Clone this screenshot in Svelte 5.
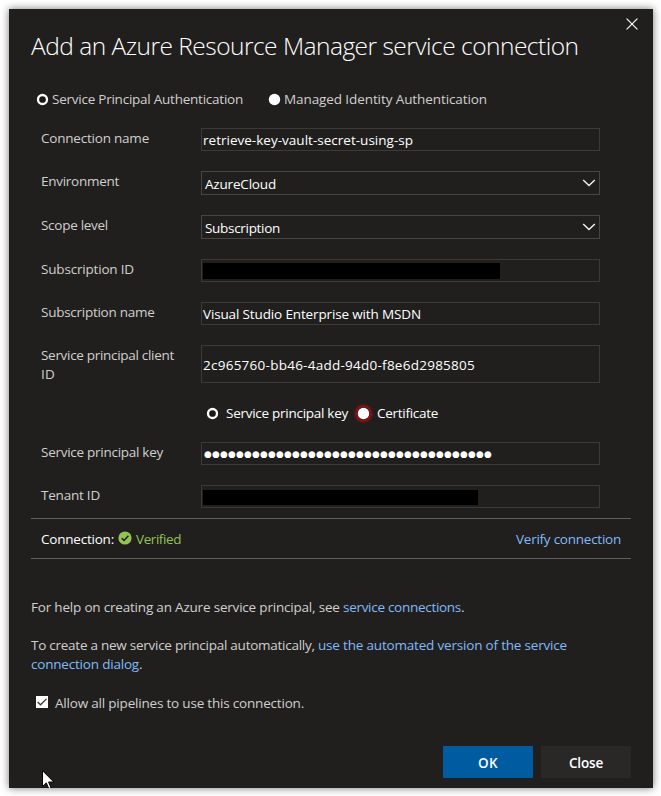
<script>
  // Distributes letter spacing so that a run of text fills the given width.
  function fit(node, width) {
    const natural = node.getBoundingClientRect().width;
    node.style.letterSpacing = (width - natural) / node.textContent.length + 'px';
  }

  const fields = [
    { label: [['Connection name', 108]], value: 'retrieve-key-vault-secret-using-sp', w: 210, kind: 'text' },
    { label: [['Environment', 78]], value: 'AzureCloud', w: 71, kind: 'select' },
    { label: [['Scope level', 67]], value: 'Subscription', w: 75, kind: 'select' },
    { label: [['Subscription ID', 93]], redacted: 297, kind: 'text' },
    { label: [['Subscription name', 113.5]], value: 'Visual Studio Enterprise with MSDN', w: 218, kind: 'text' },
    { label: [['Service principal client', 133], ['ID', 14]], value: '2c965760-bb46-4add-94d0-f8e6d2985805', w: 272, kind: 'tall' },
    { kind: 'radios' },
    { label: [['Service principal key', 122]], value: '●'.repeat(36), w: 288, kind: 'password' },
    { label: [['Tenant ID', 59]], redacted: 275, kind: 'text low' }
  ];
</script>

{#snippet radio(checked)}
  <svg class="radio" width="14" height="14" viewBox="0 0 14 14">
    {#if checked}
      <circle cx="6.5" cy="6.5" r="4.5" fill="#1b1a19" stroke="#fff" stroke-width="2.3" />
    {:else}
      <circle cx="6.5" cy="6.5" r="5.7" fill="#fff" />
    {/if}
  </svg>
{/snippet}

<main>
  <section class="dialog">
    <svg class="x" width="12" height="12" viewBox="0 0 12 12">
      <path d="M.6.6 11.4 11.4M11.4.6.6 11.4" stroke="#f4f3f2" stroke-width="1.3" />
    </svg>
    <h1><span use:fit={547.5}>Add an Azure Resource Manager service connection</span></h1>

    <div class="auth">
      <label class="first">{@render radio(true)}<span use:fit={191}>Service Principal Authentication</span></label>
      <label>{@render radio(false)}<span use:fit={203}>Managed Identity Authentication</span></label>
    </div>

    <div class="form">
      {#each fields as f}
        {#if f.kind === 'radios'}
          <div class="radios">
            {@render radio(true)}<span class="key" use:fit={122}>Service principal key</span>
            <i class="invalid">{@render radio(false)}</i><span class="cert" use:fit={61}>Certificate</span>
          </div>
        {:else}
          <div class="row">
            <div class="label">
              {#each f.label as [text, w]}<div><span use:fit={w}>{text}</span></div>{/each}
            </div>
            <div class="input {f.kind}">
              {#if f.redacted}
                <b class="redacted" style:width="{f.redacted}px"></b>
              {:else}
                <span use:fit={f.w}>{f.value}</span>
              {/if}
              {#if f.kind === 'select'}
                <svg width="14" height="8" viewBox="0 0 14 8">
                  <path d="M1.2 1 7 6.6 12.8 1" fill="none" stroke="#f4f3f2" stroke-width="1.4" />
                </svg>
              {/if}
            </div>
          </div>
        {/if}
      {/each}
    </div>

    <div class="status">
      <span class="white" use:fit={73}>Connection:</span>
      <svg width="14" height="14" viewBox="0 0 14 14">
        <circle cx="7" cy="7" r="6.6" fill="#92c353" />
        <path d="M3.7 7.2 6 9.4 10.4 4.8" fill="none" stroke="#201f1e" stroke-width="1.5" />
      </svg>
      <span class="green" use:fit={45}>Verified</span>
      <a class="verify" href="#verify"><span use:fit={105}>Verify connection</span></a>
    </div>

    <p class="help"><span use:fit={312}>For help on creating an Azure service principal, see&nbsp;</span><a href="#docs"><span use:fit={118}>service connections</span></a>.</p>
    <p class="auto">
      <span use:fit={287}>To create a new service principal automatically,&nbsp;</span><a href="#auto"><span use:fit={249}>use the automated version of the service</span><br /><span use:fit={108}>connection dialog</span></a>.
    </p>

    <div class="allow">
      <svg width="12" height="12" viewBox="0 0 12 12">
        <rect width="12" height="12" fill="#fff" />
        <path d="M1.6 6 4.5 8.8 10.5 2.9" fill="none" stroke="#333" stroke-width="1.2" />
      </svg>
      <span use:fit={249}>Allow all pipelines to use this connection.</span>
    </div>

    <div class="buttons">
      <button class="ok"><span use:fit={20}>OK</span></button>
      <button><span use:fit={34}>Close</span></button>
    </div>

    <svg class="cursor" width="13" height="20" viewBox="0 0 13 20">
      <path d="M.5.7V16.5L4.3 12.9 6.8 18.7 9 17.7 6.6 12H11.8Z" fill="#fff" stroke="#000" />
    </svg>
  </section>
</main>

<style>
  :global(body) { background: #fff; }
  main {
    box-sizing: border-box;
    width: 661px;
    height: 796px;
    padding: 9px 8px 8px 9px;
    overflow: hidden;
    font: 13.5px/19px "Open Sans", "Noto Sans", sans-serif;
    color: #d0cfce;
  }
  .dialog {
    position: relative;
    box-sizing: border-box;
    height: 779px;
    padding: 20px 22px 0;
    background: #201f1e;
    box-shadow: 0 0 8px rgba(0, 0, 0, .55);
    overflow: hidden;
    display: flex;
    flex-direction: column;
  }
  span { display: inline-block; white-space: nowrap; }
  .x { position: absolute; left: 617px; top: 9px; }
  h1 {
    margin: 0;
    height: 36px;
    font-size: 24.5px;
    line-height: 34px;
    font-weight: 300;
    color: #fff;
  }
  .auth { display: flex; margin-top: 25px; height: 19px; padding-left: 5px; }
  .auth label { display: flex; align-items: center; }
  .auth .first { width: 232px; }
  .auth span { margin-left: 2px; }
  .radio { display: block; flex: none; }
  .form { display: flex; flex-direction: column; gap: 20px; margin-top: 19px; padding: 0 31px 0 10px; }
  .row { display: flex; }
  .label { width: 160px; padding-top: 1px; height: 0; }
  .input {
    box-sizing: border-box;
    flex: 1;
    height: 23px;
    border: 1px solid #3b3a39;
    padding: 1px 4px 0 1px;
    display: flex;
    align-items: center;
    justify-content: space-between;
    color: #fff;
  }
  .select { height: 24px; border-color: #484644; padding: 2px 4px 0 3px; }
  .select svg { margin-top: -2px; margin-right: -1px; }
  .tall { height: 38px; padding-top: 2px; }
  .password span { font-size: 8.8px; font-family: "DejaVu Sans", sans-serif; margin-left: 1px; }
  .redacted { height: 16px; background: #000; }
  .low { padding-top: 2px; }
  .low .redacted { height: 15px; }
  .radios { display: flex; align-items: center; height: 17px; padding: 2px 0 0 165px; color: #fff; }
  .key { margin-left: 6px; margin-right: 9px; }
  .invalid {
    width: 13px;
    height: 13px;
    margin-right: 1px;
    border-radius: 50%;
    box-shadow: 0 0 3px 1.5px #d00808;
  }
  .cert { margin-left: 6px; }
  .status {
    display: flex;
    align-items: center;
    height: 37px;
    margin-top: 10px;
    padding: 2px 10px 0;
    border: solid #605e5c;
    border-width: 1px 0;
  }
  .status svg { margin: -4px 4px 0 4px; }
  .white { color: #fff; }
  .green { color: #92c353; }
  .verify { margin-left: auto; }
  a { color: #82baf8; text-decoration: none; }
  p { margin: 0; }
  .help { margin-top: 39px; }
  .auto { margin-top: 19px; }
  .allow { display: flex; margin-top: 20px; padding-left: 5px; }
  .allow svg { margin: 2px 7px 0 0; }
  .buttons { display: flex; justify-content: flex-end; gap: 8px; margin-top: 33px; }
  button {
    width: 90px;
    height: 32px;
    border: 0;
    padding: 2px 0 0;
    background: #292827;
    color: #fff;
    font: 600 13.5px/19px "Open Sans", sans-serif;
  }
  .ok { background: #005ba1; }
  .cursor { position: absolute; left: 33px; top: 761px; }
</style>
